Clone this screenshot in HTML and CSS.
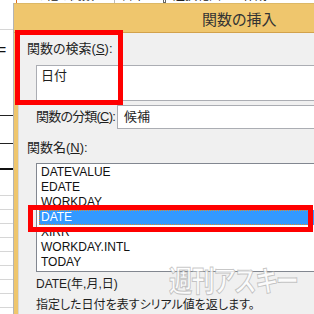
FILE: index.html
```html
<!DOCTYPE html>
<html lang="ja">
<head>
    <meta charset="UTF-8">
    <meta name="viewport" content="width=device-width, initial-scale=1.0">
    <title>関数の挿入</title>
    <link rel="stylesheet" href="styles.css">
</head>
<body>
    <!-- Excel ribbon, mostly hidden behind the dialog -->
    <div class="ribbon">
        <span class="rb-icon"></span>
        <span class="rb-text">その他の関数</span>
        <span class="rb-sep"></span>
        <span class="rb-text">日本</span>
        <span class="rb-box"></span>
        <span class="rb-text">選択範囲から作成</span>
        <span class="rb-close">×</span>
    </div>

    <div class="screen">
        <!-- Worksheet peeking out on the left -->
        <div class="sheet">
            <div class="row r0"></div>
            <div class="row r1"><span class="eq">=</span></div>
            <div class="row r2"></div>
            <div class="row r3"></div>
            <div class="row r4"></div>
            <div class="row grid"></div>
            <div class="row grid"></div>
            <div class="row grid"></div>
            <div class="row grid"></div>
            <div class="row grid"></div>
            <div class="row grid"></div>
            <div class="row grid"></div>
            <div class="row grid"></div>
        </div>

        <!-- Insert Function dialog -->
        <div class="dialog">
            <div class="titlebar">関数の挿入</div>
            <div class="dialog-body">
                <p class="label">関数の検索(<u>S</u>):</p>
                <div class="search-box">日付</div>

                <div class="category">
                    <span class="label cat-label">関数の分類(<u>C</u>):</span>
                    <div class="select">候補</div>
                </div>

                <p class="label name-label">関数名(<u>N</u>):</p>
                <ul class="func-list">
                    <li>DATEVALUE</li>
                    <li>EDATE</li>
                    <li>WORKDAY</li>
                    <li class="selected">DATE</li>
                    <li>XIRR</li>
                    <li>WORKDAY.INTL</li>
                    <li>TODAY</li>
                </ul>

                <p class="syntax">DATE(年,月,日)</p>
                <p class="desc">指定した日付を表すシリアル値を返します。</p>
            </div>
        </div>
    </div>

    <!-- Red annotation frames -->
    <div class="mark mark-search"></div>
    <div class="mark mark-date"></div>

    <div class="watermark">週刊アスキー</div>
</body>
</html>
```

FILE: styles.css
```css
html, body {
    margin: 0;
    overflow: hidden;
}
body {
    position: relative;
    width: 314px;
    height: 314px;
    background-color: #fff;
    font-family: "Liberation Sans", "Noto Sans CJK JP", sans-serif;
    font-feature-settings: "palt";
    color: #1e1e1e;
}

/* Ribbon strip at the very top */
.ribbon {
    height: 3px;
    overflow: hidden;
    display: flex;
    align-items: flex-end;
    font-size: 12px;
    line-height: 14px;
    color: #222;
}
.rb-icon {
    width: 10px;
    height: 14px;
    margin-left: 16px;
    background-color: #e07020;
}
.rb-text {
    margin-left: 7px;
    white-space: nowrap;
}
.rb-sep {
    width: 1px;
    height: 14px;
    margin-left: 20px;
    background-color: #bbb;
}
.rb-box {
    width: 8px;
    height: 12px;
    margin-left: 18px;
    border: 1px solid #666;
}
.rb-close {
    margin-left: 40px;
    color: #d03030;
}

.screen {
    display: flex;
    height: 311px;
}

/* Worksheet */
.sheet {
    flex: none;
    width: 13px;
    display: flex;
    flex-direction: column;
}
.row {
    flex: none;
    border-bottom: 1px solid #d6d6d6;
}
.r0 { height: 26px; }
.r1 {
    height: 85px;
    border-bottom-color: #222;
}
.r2 {
    height: 27px;
    border-bottom-color: #222;
}
.r3 {
    height: 24px;
    border-bottom: 2px solid #111;
}
.r4 { height: 25px; }
.grid { height: 13px; }
.eq {
    display: block;
    margin: 13px 0 0 -2px;
    font-size: 14px;
    line-height: 14px;
    color: #111;
}

/* Dialog */
.dialog {
    flex: 1;
    display: flex;
    flex-direction: column;
    border-left: 1px solid #b4b4b4;
    background-color: #efc66d;
}
.titlebar {
    height: 26px;
    padding: 2px 0 0 188px;
    border-top: 1px solid #dcb866;
    border-bottom: 1px solid #d2a24c;
    font-family: "Noto Sans CJK JP", sans-serif;
    font-size: 15px;
    line-height: 26px;
    color: #333;
    white-space: nowrap;
}
.dialog-body {
    flex: 1;
    margin-left: 4px;
    padding: 8px 0 0 8px;
    border-left: 1px solid #d8d8d8;
    background-color: #f0f0f0;
}
.label {
    margin: 0;
    font-size: 13px;
    line-height: 16px;
    white-space: nowrap;
}
.search-box {
    box-sizing: border-box;
    height: 36px;
    margin: 8px -6px 0 9px;
    padding: 2px 4px 0;
    border: 1px solid #abadb3;
    background-color: #fff;
    font-size: 13px;
    line-height: 16px;
}
.category {
    display: flex;
    align-items: center;
    margin: 4px -6px 0 9px;
}
.cat-label {
    flex: none;
    margin-right: 2px;
    letter-spacing: -0.8px;
}
.select {
    flex: 1;
    height: 22px;
    padding-left: 6px;
    border: 1px solid #abadb3;
    background-color: #fff;
    font-size: 13px;
    line-height: 22px;
}
.name-label {
    margin-top: 11px;
}
.func-list {
    list-style: none;
    margin: 7px -6px 0 9px;
    padding: 1px 0;
    border: 1px solid #828790;
    background-color: #fff;
    font-size: 12px;
}
.func-list li {
    height: 15px;
    margin-left: 2px;
    padding-left: 2px;
    line-height: 15px;
    color: #111;
}
.func-list li.selected {
    background-color: #3399ff;
    color: #fff;
    outline: 1px dotted #e08a2a;
    outline-offset: -1px;
}
.syntax,
.desc {
    margin: 4px 0 0 9px;
    font-size: 12px;
    line-height: 16px;
    white-space: nowrap;
}
.desc {
    margin-top: 5px;
}

/* Red highlight frames drawn over the screenshot */
.mark {
    position: absolute;
    box-sizing: border-box;
    border: 5px solid #ff0000;
}
.mark-search {
    left: 15px;
    top: 30px;
    width: 108px;
    height: 75px;
}
.mark-date {
    left: 28px;
    top: 205px;
    width: 285px;
    height: 27px;
}

/* Publisher watermark */
.watermark {
    position: absolute;
    left: 169px;
    top: 261px;
    font-family: "Noto Sans CJK JP", sans-serif;
    font-size: 29px;
    font-weight: bold;
    line-height: 36px;
    letter-spacing: -1px;
    color: rgba(255, 255, 255, 0.8);
    -webkit-text-stroke: 1px rgba(150, 150, 150, 0.55);
    white-space: nowrap;
    transform: scaleX(0.8);
    transform-origin: left center;
}
```
